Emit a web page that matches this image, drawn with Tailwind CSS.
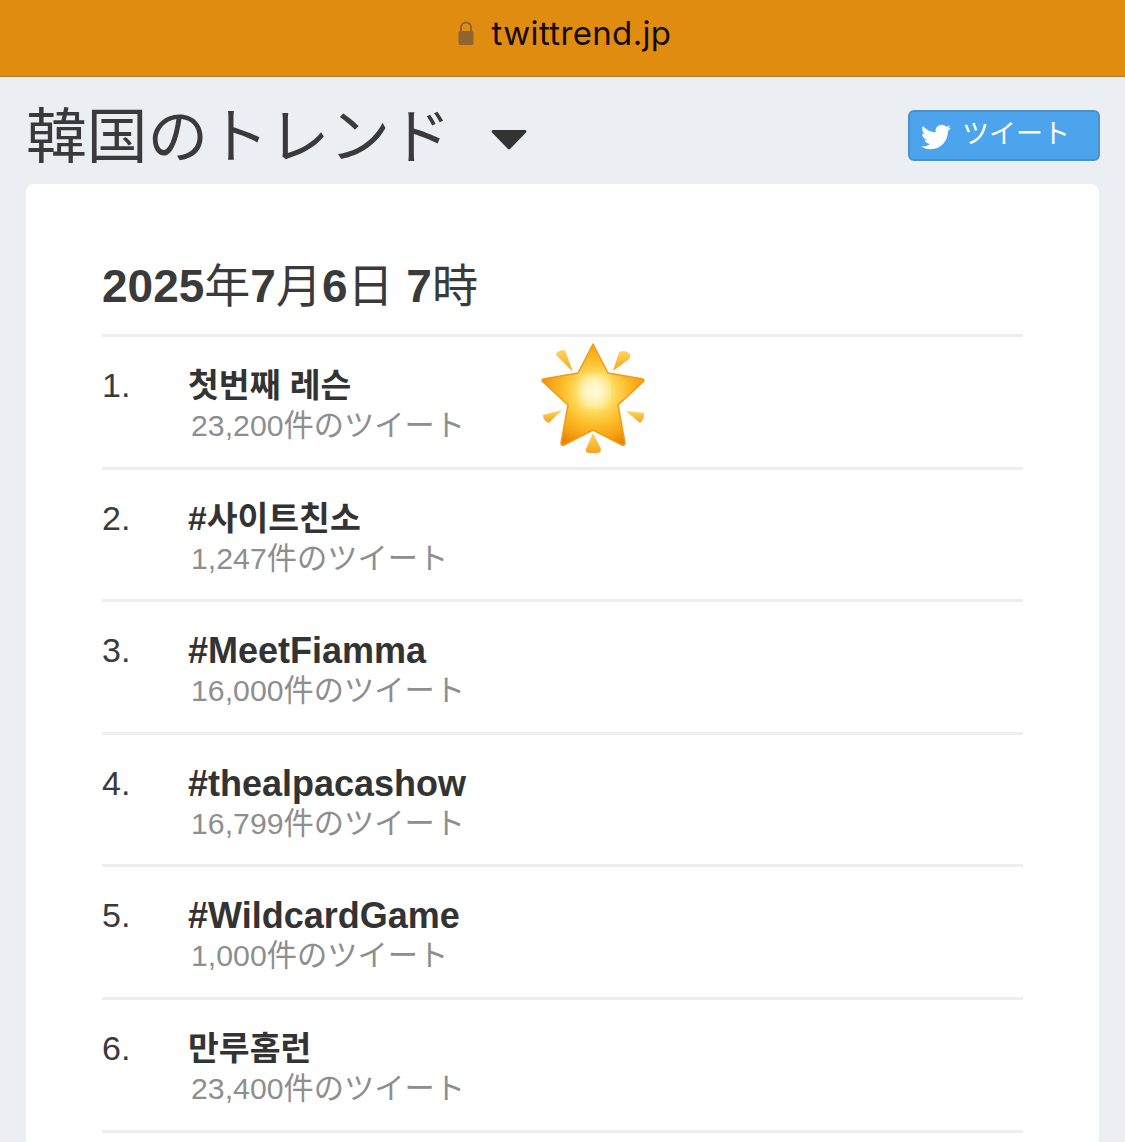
<!DOCTYPE html>
<html lang="ja">

<head>
    <meta charset="UTF-8">
    <meta name="viewport" content="width=device-width, initial-scale=1.0">
    <script src="https://cdn.jsdelivr.net/npm/@tailwindcss/browser@4"></script>
    <title>韓国のトレンド</title>
</head>

<body class="h-[1142px] overflow-hidden bg-[#ebeff4] text-[#333] font-['Liberation_Sans','Noto_Sans_CJK_JP',sans-serif]">
    <!-- Browser address bar -->
    <header class="h-[77px] bg-[#e08c10] border-b border-[#b5782a] flex items-center justify-center gap-[17px] pl-[3px] pb-[10px]">
        <svg class="w-[18px] h-[26px]" viewBox="0 0 18 26">
            <path d="M4 12V7.500a5 5 0 0 1 10 0V12" fill="none" stroke="#8f6530" stroke-width="2" />
            <rect x="1.500" y="11" width="15" height="14" rx="2" fill="#8f6530" />
        </svg>
        <span class="text-[33px] leading-none tracking-[0.35px] text-[#140d03] font-['Inter',sans-serif]">twittrend.jp</span>
    </header>

    <!-- Title and tweet button -->
    <div class="h-[107px] pl-[26px] pr-[25px] pt-[8px] flex items-center">
        <h1 class="text-[60.700px] leading-none font-normal text-[#3a3a3c] pt-[6px]">韓国のトレンド</h1>
        <svg class="ml-[40px] mt-[9px] w-[36px] h-[21px]" viewBox="0 0 36 21">
            <path d="M2 1h32a1.500 1.500 0 0 1 1 2.500L19.500 19.500a2 2 0 0 1-3 0L1 3.500A1.500 1.500 0 0 1 2 1z" fill="#333" />
        </svg>
        <a class="ml-auto mt-[2px] w-[192px] h-[51px] rounded-[6px] bg-[#4ca5ec] border-2 border-[#4f8fc8] flex items-center pl-[11px] gap-[11px] text-white">
            <svg class="w-[30px] h-[30px] mt-[3px]" viewBox="0 0 24 24" fill="#fff">
                <path d="M23.950 4.570a10 10 0 0 1-2.820.770 4.960 4.960 0 0 0 2.160-2.720c-.950.550-2 .950-3.130 1.180a4.920 4.920 0 0 0-8.380 4.480C7.690 8.100 4.070 6.130 1.640 3.160a4.820 4.820 0 0 0-.660 2.470c0 1.710.870 3.210 2.190 4.100a4.900 4.900 0 0 1-2.230-.620v.060a4.920 4.920 0 0 0 3.950 4.830 5 5 0 0 1-2.210.080 4.940 4.940 0 0 0 4.600 3.420A9.870 9.870 0 0 1 0 19.540a14 14 0 0 0 7.560 2.210c9.050 0 14-7.500 14-13.980 0-.210 0-.420-.020-.630a9.940 9.940 0 0 0 2.410-2.570z" />
            </svg>
            <span class="text-[27px] leading-none -mt-[2px]">ツイート</span>
        </a>
    </div>

    <!-- Trend card -->
    <main class="relative mx-[26px] h-[1000px] bg-white rounded-[8px] px-[76px]">
        <h2 class="h-[153px] pt-[72px] text-[46px] leading-[60px] font-bold text-[#3a3a3a] border-b-[3px] border-[#eeeeee]">2025<span class="font-normal">年</span>7<span class="font-normal">月</span>6<span class="font-normal">日</span> 7<span class="font-normal">時</span></h2>

        <ol>
            <li class="h-[132.600px] flex border-b-[3px] border-[#eeeeee]">
                <span class="w-[86px] pt-[28px] text-[34px] leading-[40px] text-[#3a3a3c]">1.</span>
                <div class="pt-[29px]">
                    <p class="text-[33.500px] leading-[40px] font-bold text-[#333]">첫번째 레슨</p>
                    <p class="pl-[3px] text-[30.250px] leading-[40px] text-[#8e8e8e]">23,200件のツイート</p>
                </div>
            </li>
            <li class="h-[132.600px] flex border-b-[3px] border-[#eeeeee]">
                <span class="w-[86px] pt-[28px] text-[34px] leading-[40px] text-[#3a3a3c]">2.</span>
                <div class="pt-[29px]">
                    <p class="text-[33.500px] leading-[40px] font-bold text-[#333]">#사이트친소</p>
                    <p class="pl-[3px] text-[30.250px] leading-[40px] text-[#8e8e8e]">1,247件のツイート</p>
                </div>
            </li>
            <li class="h-[132.600px] flex border-b-[3px] border-[#eeeeee]">
                <span class="w-[86px] pt-[28px] text-[34px] leading-[40px] text-[#3a3a3c]">3.</span>
                <div class="pt-[29px]">
                    <p class="text-[36px] leading-[40px] font-bold text-[#333]">#MeetFiamma</p>
                    <p class="pl-[3px] text-[30.250px] leading-[40px] text-[#8e8e8e]">16,000件のツイート</p>
                </div>
            </li>
            <li class="h-[132.600px] flex border-b-[3px] border-[#eeeeee]">
                <span class="w-[86px] pt-[28px] text-[34px] leading-[40px] text-[#3a3a3c]">4.</span>
                <div class="pt-[29px]">
                    <p class="text-[36px] leading-[40px] font-bold text-[#333]">#thealpacashow</p>
                    <p class="pl-[3px] text-[30.250px] leading-[40px] text-[#8e8e8e]">16,799件のツイート</p>
                </div>
            </li>
            <li class="h-[132.600px] flex border-b-[3px] border-[#eeeeee]">
                <span class="w-[86px] pt-[28px] text-[34px] leading-[40px] text-[#3a3a3c]">5.</span>
                <div class="pt-[29px]">
                    <p class="text-[36px] leading-[40px] font-bold text-[#333]">#WildcardGame</p>
                    <p class="pl-[3px] text-[30.250px] leading-[40px] text-[#8e8e8e]">1,000件のツイート</p>
                </div>
            </li>
            <li class="h-[132.600px] flex border-b-[3px] border-[#eeeeee]">
                <span class="w-[86px] pt-[28px] text-[34px] leading-[40px] text-[#3a3a3c]">6.</span>
                <div class="pt-[29px]">
                    <p class="text-[33.500px] leading-[40px] font-bold text-[#333]">만루홈런</p>
                    <p class="pl-[3px] text-[30.250px] leading-[40px] text-[#8e8e8e]">23,400件のツイート</p>
                </div>
            </li>
        </ol>

        <!-- Glowing star sticker -->
        <svg class="absolute left-[514px] top-[157px] w-[108px] h-[114px]" viewBox="0 0 108 114">
            <defs>
                <radialGradient id="starFill" cx="52%" cy="48%" r="54%">
                    <stop offset="0%" stop-color="#fff3b0" />
                    <stop offset="30%" stop-color="#ffe06a" />
                    <stop offset="58%" stop-color="#fdbf2c" />
                    <stop offset="85%" stop-color="#f6a112" />
                    <stop offset="100%" stop-color="#e8870a" />
                </radialGradient>
                <linearGradient id="rayFill" x1="0" y1="0" x2="0" y2="1">
                    <stop offset="0%" stop-color="#ffd45c" />
                    <stop offset="100%" stop-color="#f5a623" />
                </linearGradient>
                <filter id="soften"><feGaussianBlur stdDeviation="6" /></filter>
            </defs>
            <path d="M53 3 L68 32 L103 38 Q105 39.500 103 41 L78 64 L85 102 Q85 105 82 104 L53 89 L24 104 Q21 105 21 102 L28 64 L3 41 Q1 39.500 3 38 L38 32 Z" fill="url(#starFill)" stroke="#f09c18" stroke-width="1.500" stroke-linejoin="round" />
            <ellipse cx="54" cy="50" rx="14" ry="15" fill="#fffbe0" opacity="0.8" filter="url(#soften)" />
            <g fill="url(#rayFill)">
                <path d="M33 31 L16 14 Q17 9 25 9 Z" />
                <path d="M73 30 L79 11 Q85 8 90 13 Q91 17 88 19 Z" />
                <path d="M22 69 L3 74 Q3 80 9 82 Z" />
                <path d="M86 70 L104 72 Q105 78 100 82 Z" />
                <path d="M53 92 L61 108 Q61 112 57 112 H49 Q45 112 46 108 Z" />
            </g>
        </svg>
    </main>
</body>

</html>
